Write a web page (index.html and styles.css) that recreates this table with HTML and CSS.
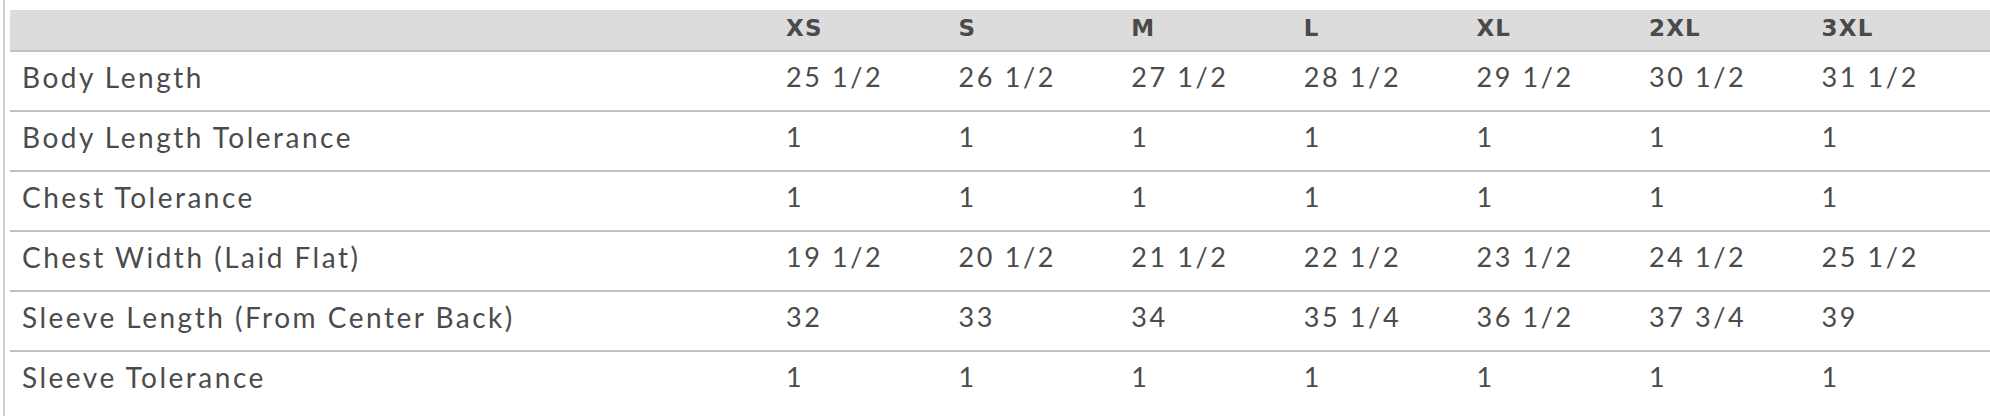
FILE: index.html
```html
<!DOCTYPE html>
<html>
<head>
<meta charset="utf-8">
<link rel="stylesheet" href="styles.css">
</head>
<body>
<div class="frame">
  <div class="chart">
    <div class="row head">
      <div class="cell label"></div>
      <div class="cell">XS</div>
      <div class="cell">S</div>
      <div class="cell">M</div>
      <div class="cell">L</div>
      <div class="cell">XL</div>
      <div class="cell">2XL</div>
      <div class="cell">3XL</div>
    </div>
    <div class="row">
      <div class="cell label">Body Length</div>
      <div class="cell">25 1/2</div><div class="cell">26 1/2</div><div class="cell">27 1/2</div><div class="cell">28 1/2</div><div class="cell">29 1/2</div><div class="cell">30 1/2</div><div class="cell">31 1/2</div>
    </div>
    <div class="row">
      <div class="cell label">Body Length Tolerance</div>
      <div class="cell">1</div><div class="cell">1</div><div class="cell">1</div><div class="cell">1</div><div class="cell">1</div><div class="cell">1</div><div class="cell">1</div>
    </div>
    <div class="row">
      <div class="cell label">Chest Tolerance</div>
      <div class="cell">1</div><div class="cell">1</div><div class="cell">1</div><div class="cell">1</div><div class="cell">1</div><div class="cell">1</div><div class="cell">1</div>
    </div>
    <div class="row">
      <div class="cell label">Chest Width (Laid Flat)</div>
      <div class="cell">19 1/2</div><div class="cell">20 1/2</div><div class="cell">21 1/2</div><div class="cell">22 1/2</div><div class="cell">23 1/2</div><div class="cell">24 1/2</div><div class="cell">25 1/2</div>
    </div>
    <div class="row">
      <div class="cell label">Sleeve Length (From Center Back)</div>
      <div class="cell">32</div><div class="cell">33</div><div class="cell">34</div><div class="cell">35 1/4</div><div class="cell">36 1/2</div><div class="cell">37 3/4</div><div class="cell">39</div>
    </div>
    <div class="row last">
      <div class="cell label">Sleeve Tolerance</div>
      <div class="cell">1</div><div class="cell">1</div><div class="cell">1</div><div class="cell">1</div><div class="cell">1</div><div class="cell">1</div><div class="cell">1</div>
    </div>
  </div>
</div>
</body>
</html>
```

FILE: styles.css
```css
html, body {
  margin: 0;
  padding: 0;
  background: #ffffff;
}
.frame {
  margin-left: 3px;
  border-left: 2px solid #cfcfcf;
  padding: 10px 0 6px 5px;
  height: 400px;
}
.chart {
  display: flex;
  flex-direction: column;
  font-family: Lato, "Noto Sans", sans-serif;
  color: #4b4b4b;
}
.row {
  display: grid;
  grid-template-columns: 764px repeat(6, 172.6px) 1fr;
  height: 58px;
  align-items: center;
  border-bottom: 2px solid #c2c2c2;
  font-size: 27px;
  letter-spacing: 2.6px;
}
.row .cell {
  padding-bottom: 9px;
}
.row .label {
  font-size: 28px;
  letter-spacing: 2.5px;
}
.row.last {
  border-bottom: none;
}
.row.head {
  height: 40px;
  background: #dcdcdc;
  font-family: "DejaVu Sans", sans-serif;
  font-weight: bold;
  font-size: 23px;
  letter-spacing: 1.2px;
  color: #4a4a4a;
}
.row.head .cell {
  padding-bottom: 5px;
}
.cell {
  padding-left: 12px;
  white-space: nowrap;
}
```
